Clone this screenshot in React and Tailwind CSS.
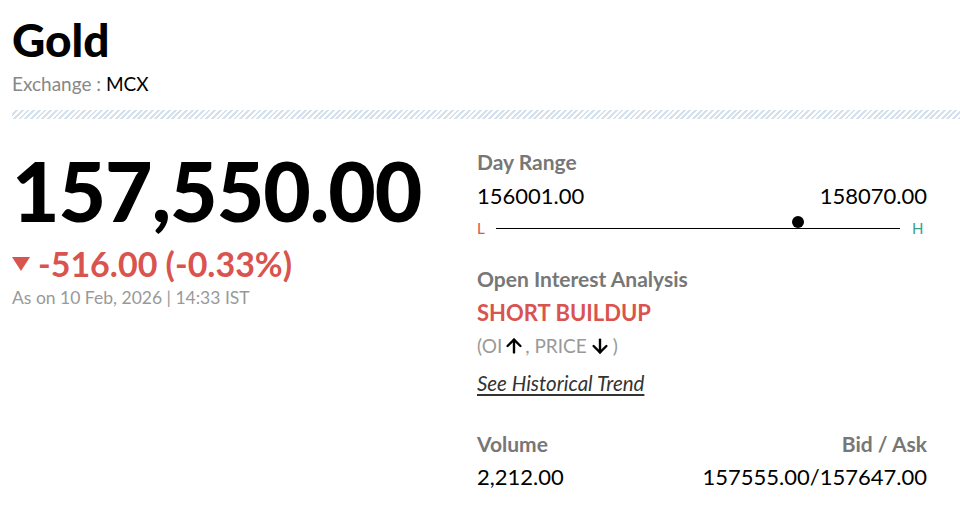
import React from 'react';
import { ArrowUp, ArrowDown } from 'lucide-react';

const quote = {
  name: 'Gold',
  exchange: 'MCX',
  price: '157,550.00',
  change: '-516.00 (-0.33%)',
  asOn: 'As on 10 Feb, 2026 | 14:33 IST',
  low: 156001,
  high: 158070,
  last: 157550,
  volume: '2,212.00',
  bid: '157555.00',
  ask: '157647.00',
};

const Label = ({ children, className = '' }) => (
  <div className={`text-[21px] leading-[25px] font-bold text-[#777777] ${className}`}>{children}</div>
);

const DayRange = ({ low, high, last }) => {
  const pct = ((last - low) / (high - low)) * 100;
  return (
    <div>
      <Label>Day Range</Label>
      <div className="mt-[9px] flex justify-between text-[22px] leading-[26px] text-black">
        <span>{low.toFixed(2)}</span>
        <span>{high.toFixed(2)}</span>
      </div>
      <div className="mt-[9px] flex h-[20px] items-center">
        <span className="w-[19px] text-[15px] leading-[18px] text-[#d9534f]">L</span>
        <div className="relative h-px flex-1 bg-black">
          <div
            className="absolute bottom-[1px] h-3 w-3 -translate-x-1/2 rounded-full bg-black"
            style={{ left: `${pct}%` }}
          />
        </div>
        <span className="w-[27px] pl-[12px] text-[15px] leading-[18px] text-[#3a9f8c]">H</span>
      </div>
    </div>
  );
};

const App = () => {
  return (
    <div className="min-h-screen bg-white pl-3 pt-3 font-['Lato',sans-serif] text-black">
      <h1 className="text-[46px] leading-[55px] font-black">{quote.name}</h1>
      <p className="mt-[5px] text-[19px] leading-[23px] text-[#888888]">
        Exchange : <span className="text-black">{quote.exchange}</span>
      </p>

      <div className="mt-[15px] h-[9px] bg-[repeating-linear-gradient(-45deg,#d5e2ee_0,#d5e2ee_2px,transparent_2px,transparent_4px)]" />

      <div className="mt-[22px] flex">
        <div className="w-[465px]">
          <div className="text-[82px] leading-[98px] font-black tracking-[-1px]">{quote.price}</div>
          <div className="mt-[5px] flex items-center text-[34px] leading-[40px] font-bold text-[#d9534f]">
            <svg width="18" height="14" viewBox="0 0 18 14" className="mr-[8px]">
              <polygon points="0,0 18,0 9,14" fill="#d9534f" />
            </svg>
            <span>{quote.change}</span>
          </div>
          <div className="mt-[3px] text-[17.5px] leading-[21px] text-[#999999]">{quote.asOn}</div>
        </div>

        <div className="w-[450px] pt-[8px]">
          <DayRange low={quote.low} high={quote.high} last={quote.last} />

          <Label className="mt-[28px]">Open Interest Analysis</Label>
          <div className="mt-[9px] text-[22px] leading-[26px] font-bold text-[#d9534f]">SHORT BUILDUP</div>
          <div className="mt-[8px] flex items-center text-[19px] leading-[23px] text-[#999999]">
            <span>(OI</span>
            <ArrowUp className="ml-[1px] h-[22px] w-[22px] text-black" strokeWidth={2.6} />
            <span>, PRICE</span>
            <ArrowDown className="ml-[2px] h-[22px] w-[22px] text-black" strokeWidth={2.6} />
            <span className="ml-[2px]">)</span>
          </div>
          <a href="#" className="mt-[14px] block w-fit text-[20.5px] leading-[24px] italic text-[#333333] underline decoration-2 underline-offset-[3px]">
            See Historical Trend
          </a>

          <div className="mt-[36px] flex justify-between">
            <Label>Volume</Label>
            <Label>Bid / Ask</Label>
          </div>
          <div className="mt-[8px] flex justify-between text-[22px] leading-[26px]">
            <span>{quote.volume}</span>
            <span>{quote.bid}/{quote.ask}</span>
          </div>
        </div>
      </div>
    </div>
  );
};

export default App;
